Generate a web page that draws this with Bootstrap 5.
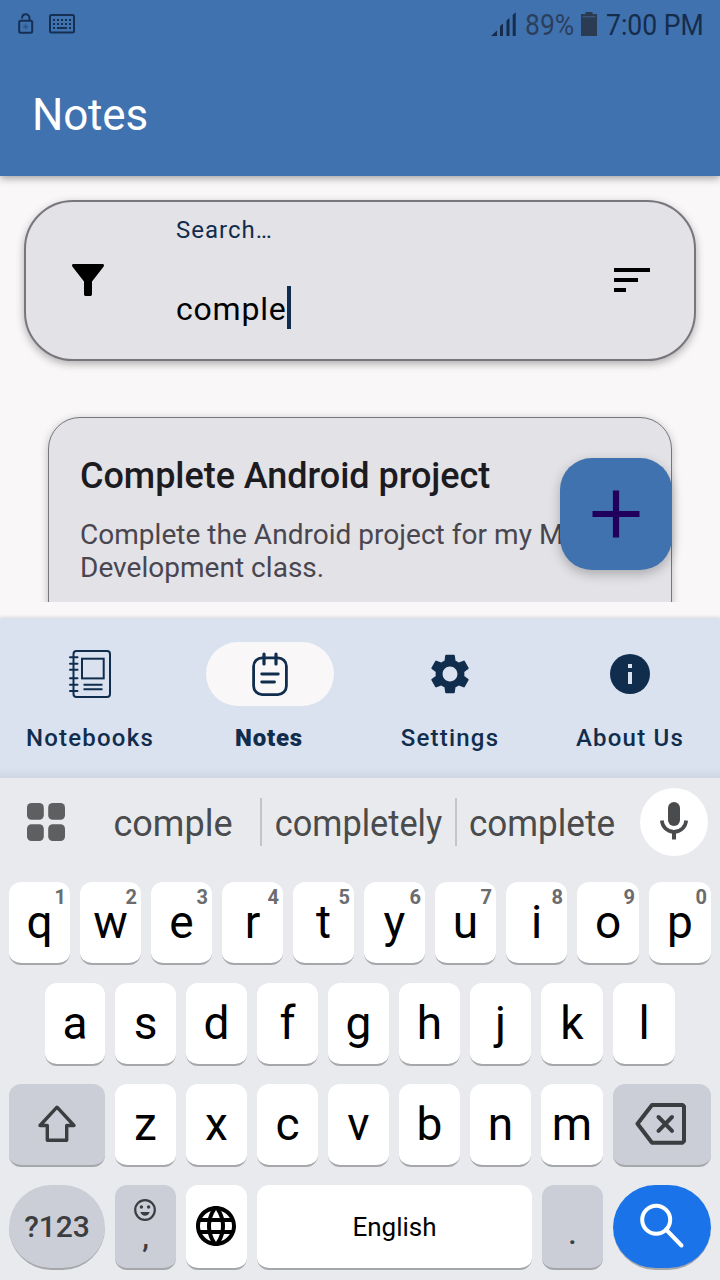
<!DOCTYPE html>
<html lang="en">
<head>
<meta charset="utf-8">
<meta name="viewport" content="width=device-width, initial-scale=1">
<title>Notes</title>
<link href="https://cdn.jsdelivr.net/npm/bootstrap@5.3.0/dist/css/bootstrap.min.css" rel="stylesheet">
<style>
  :root { --brand: #4072af; --ink: #112d4e; --sheet: #e2e2e7; --page: #f9f7f8; --kb: #e8eaed; --key-alt: #cbced6; }
  body { font-family: Roboto, "Liberation Sans", sans-serif; background: var(--page); width: 720px; height: 1280px; overflow: hidden; }
  svg { display: block; flex: none; }
  .app-header { height: 176px; background: var(--brand); box-shadow: 0 2px 8px rgba(0,0,0,.38); z-index: 2; }
  .status-bar { height: 48px; padding: 1px 16px 0 18px; font-size: 30px; line-height: 48px; color: #152c4c; }
  .status-bar svg { margin-top: -1px; }
  .squeeze { display: inline-block; transform-origin: 0 50%; white-space: nowrap; }
  .pct { width: 48px; margin-left: 9px; color: #2b3f5c; transform: scaleX(.885); }
  .clock { width: 98px; margin-left: 9px; transform: scaleX(.885); }
  .toolbar { height: 128px; padding: 5px 0 0 32px; font-size: 44px; line-height: 124px; letter-spacing: -.2px; color: #fff; }
  .content-area { height: 426px; padding: 24px 24px 0; }
  .search-box { height: 161px; border: 2px solid #78767c; border-radius: 49px; background: var(--sheet); padding: 0 44px 0 46px; box-shadow: 0 3px 9px rgba(0,0,0,.3); }
  .search-box > svg { margin-top: 62px; }
  .search-box > svg:last-child { margin-top: 66px; }
  .search-field { margin-left: 72px; padding-top: 14px; }
  .search-hint { font-size: 24px; line-height: 28px; letter-spacing: 1px; color: var(--ink); }
  .search-value { margin-top: 42px; font-size: 32px; line-height: 46px; letter-spacing: .8px; color: #000; height: 44px; }
  .caret { width: 4px; height: 43px; background: var(--ink); }
  .note-card { margin: 56px 24px 0; height: 260px; border: 1px solid #78767c; border-radius: 32px; background: var(--sheet); padding: 36px 31px; box-shadow: 0 2px 9px rgba(0,0,0,.25); }
  .note-title { font-size: 36px; font-weight: 500; line-height: 45px; letter-spacing: -.04px; color: #1c1b1f; }
  .note-text { margin-top: 19px; font-size: 28px; line-height: 33px; letter-spacing: .03px; color: #49464f; }
  .fab { right: 48px; top: 458px; width: 112px; height: 112px; border-radius: 32px; background: var(--brand); box-shadow: 0 4px 12px rgba(0,0,0,.25); z-index: 3; }
  .bottom-nav { margin-top: 16px; height: 160px; background: linear-gradient(#dbe2ef 150px, #ced6e4); padding-top: 24px; color: var(--ink); box-shadow: 0 -1px 3px rgba(0,0,0,.12); }
  .tab-pill { width: 128px; height: 64px; border-radius: 32px; }
  .tab-item.active .tab-pill { background: var(--page); }
  .tab-label { margin-top: 18px; font-size: 24px; line-height: 28px; font-weight: 500; letter-spacing: 1.2px; white-space: nowrap; }
  .tab-item.active .tab-label { font-weight: 900; letter-spacing: .8px; margin-right: 2px; }
  .keyboard { height: 502px; background: var(--kb); }
  .suggestions { height: 104px; padding: 10px 12px 0 27px; }
  .word { font-size: 36px; line-height: 73px; color: #4a4b4d; text-align: center; }
  .word-sep { width: 2px; height: 48px; margin-top: 10px; background: #c2c4c7; }
  .mic { width: 68px; height: 68px; background: #fff; }
  .keys { padding: 0 9px; gap: 10px; margin-bottom: 18px; }
  .key { position: relative; flex: 0 0 61px; height: 83px; border-radius: 12px; background: #fff; border-bottom: 2px solid #a5a7ab; color: #000; font-size: 46px; line-height: 80px; text-align: center; }
  .key.alt { background: var(--key-alt); color: #3c3d40; }
  .key.w-l { flex-basis: 96px; } .key.w-r { flex-basis: 98px; } .key.w-m { flex-basis: 62px; } .key.w-n { flex-basis: 60px; } .key.w-space { flex-basis: 275px; }
  .key sup { position: absolute; top: 4px; right: 4px; font-size: 20px; font-weight: 700; line-height: 22px; color: #6b6c6e; }
  .last .key { height: 85px; line-height: 84px; }
  .key.round { border-radius: 48px; }
</style>
</head>
<body class="d-flex flex-column position-relative">

<header class="app-header position-relative flex-shrink-0">
  <div class="status-bar d-flex align-items-center">
    <svg width="16" height="22" viewBox="0 0 16 22" fill="none" stroke="#152f52"><path d="M4 5.500C4 3 5.500 1.200 7.700 1.200S11.500 3 11.500 5.200V8" stroke-width="2"/><rect x="1.200" y="7.800" width="13" height="12" rx="1.500" stroke-width="2"/><path d="M7.700 10.700v6M4.700 13.700h6M5.700 11.700l4 4M9.700 11.700l-4 4" stroke="#2d568a" stroke-width="1"/></svg>
    <svg style="margin-left:15px" width="26" height="20" viewBox="0 0 26 20"><rect x="1" y="1" width="24" height="17.500" rx="1.500" fill="none" stroke="#152f52" stroke-width="2"/><path d="M4 6h18M4 10h18" stroke="#152f52" stroke-width="2" stroke-dasharray="2 2"/><path d="M4 14h2M8 14h10M20 14h2" stroke="#152f52" stroke-width="2"/></svg>
    <svg class="ms-auto" width="25" height="24" viewBox="0 0 25 24" fill="#152c4c"><path d="M0 24L6 18.500V24zM9 24V14l3-2.500V24zM15.500 24V8.500l3-2.500V24zM21.700 24V3l3-2.700V24z"/></svg>
    <span class="squeeze pct">89%</span>
    <svg style="margin-left:8px" width="16" height="24" viewBox="0 0 16 24"><path d="M4.500 0h7v2H16v22H0V2h4.500z" fill="#2b3b52"/><path d="M1.500 4.800h13" stroke="#4a6b96" stroke-width=".8"/></svg>
    <span class="squeeze clock">7:00 PM</span>
  </div>
  <div class="toolbar">Notes</div>
</header>

<main class="content-area overflow-hidden flex-shrink-0">
  <div class="search-box d-flex align-items-start">
    <svg width="32" height="32" viewBox="0 0 32 32"><path d="M1.500 0h29c1.400 0 2 1.600 1 2.700L20 17.500v12.700c0 1-.8 1.800-1.800 1.800h-4.400c-1 0-1.800-.8-1.800-1.800V17.500L.5 2.700C-.5 1.600.1 0 1.500 0z"/></svg>
    <div class="search-field">
      <div class="search-hint">Search…</div>
      <div class="search-value d-flex"><span>comple</span><i class="caret"></i></div>
    </div>
    <svg class="ms-auto" width="36" height="24" viewBox="0 0 36 24"><path d="M0 0h36v4H0zM0 10h24v4H0zM0 20h12v4H0z"/></svg>
  </div>
  <article class="note-card">
    <div class="note-title">Complete Android project</div>
    <div class="note-text">Complete the Android project for my Mobile Development class.</div>
  </article>
</main>

<div class="fab position-absolute d-flex align-items-center justify-content-center">
  <svg width="48" height="48" viewBox="0 0 48 48"><path d="M24 .5v47M.5 24h47" stroke="#21005d" stroke-width="6.200"/></svg>
</div>

<nav class="bottom-nav d-flex flex-shrink-0">
  <div class="tab-item col-3 d-flex flex-column align-items-center">
    <div class="tab-pill d-flex align-items-center justify-content-center"><svg width="48" height="48" viewBox="0 0 48 48" fill="none" stroke="#112d4e" stroke-width="2"><rect x="7.500" y="1" width="36.500" height="46" rx="3"/><path d="M4 7.300H11.500M4 13.700H11.500M4 19.700H11.500M4 28.300H11.500M4 34.700H11.500M4 41H11.500" stroke-linecap="round"/><rect x="16" y="8.700" width="21.700" height="19.700"/><path d="M17.500 34.700h19M17.500 39.300h19"/></svg></div>
    <div class="tab-label">Notebooks</div>
  </div>
  <div class="tab-item active col-3 d-flex flex-column align-items-center">
    <div class="tab-pill d-flex align-items-center justify-content-center"><svg width="48" height="48" viewBox="0 0 48 48" fill="none" stroke="#112d4e" stroke-width="2.800" stroke-linecap="round"><rect x="7.600" y="7.800" width="32.800" height="36.800" rx="8.500"/><path d="M18 4v10M30 4v10" stroke-width="3.200"/><path d="M15.700 24h16.600M15.700 32h12.800"/></svg></div>
    <div class="tab-label">Notes</div>
  </div>
  <div class="tab-item col-3 d-flex flex-column align-items-center">
    <div class="tab-pill d-flex align-items-center justify-content-center"><svg width="48" height="48" viewBox="0 0 24 24" fill="#112d4e"><path d="M19.140 12.940c.04-.3.060-.61.060-.94 0-.32-.02-.64-.07-.94l2.030-1.580c.18-.14.23-.41.12-.61l-1.920-3.320c-.12-.22-.37-.29-.59-.22l-2.390.96c-.5-.38-1.030-.7-1.620-.94L14.400 2.810c-.04-.24-.24-.41-.48-.41h-3.840c-.24 0-.43.17-.47.41L9.250 5.350C8.660 5.590 8.120 5.920 7.630 6.290L5.240 5.330c-.22-.08-.47 0-.59.22L2.740 8.870C2.620 9.080 2.660 9.340 2.860 9.480l2.030 1.580C4.840 11.360 4.800 11.690 4.800 12s.02.64.07.94l-2.030 1.580c-.18.14-.23.41-.12.61l1.920 3.320c.12.22.37.29.59.22l2.390-.96c.5.38 1.030.7 1.620.94l.36 2.540c.05.24.24.41.48.41h3.840c.24 0 .44-.17.47-.41l.36-2.540c.59-.24 1.130-.56 1.620-.94l2.390.96c.22.08.47 0 .59-.22l1.920-3.320c.12-.22.07-.47-.12-.61L19.140 12.940zM12 15.700c-2.050 0-3.700-1.650-3.700-3.700s1.650-3.700 3.700-3.700 3.700 1.650 3.700 3.700-1.650 3.700-3.700 3.700z"/></svg></div>
    <div class="tab-label">Settings</div>
  </div>
  <div class="tab-item col-3 d-flex flex-column align-items-center">
    <div class="tab-pill d-flex align-items-center justify-content-center"><svg width="48" height="48" viewBox="0 0 48 48"><circle cx="24" cy="24" r="20" fill="#112d4e"/><path d="M22 14h4v4h-4zM22 22h4v12h-4z" fill="#dbe2ef"/></svg></div>
    <div class="tab-label">About Us</div>
  </div>
</nav>

<section class="keyboard flex-shrink-0">
  <div class="suggestions d-flex">
    <svg style="margin-top:15px" width="38" height="38" viewBox="0 0 38 38" fill="#5e5f61"><rect width="16.800" height="16.800" rx="4.500"/><rect x="21.200" width="16.800" height="16.800" rx="4.500"/><rect y="21.200" width="16.800" height="16.800" rx="4.500"/><rect x="21.200" y="21.200" width="16.800" height="16.800" rx="4.500"/></svg>
    <div class="word" style="width:176px;margin-left:20px">comple</div>
    <div class="word-sep" style="margin-left:-1px"></div>
    <div class="word" style="width:193px;transform:scaleX(.953)">completely</div>
    <div class="word-sep"></div>
    <div class="word" style="width:170px;transform:scaleX(.975)">complete</div>
    <div class="mic rounded-circle ms-auto"><svg width="68" height="68" viewBox="0 0 68 68"><rect x="28" y="14" width="12" height="24" rx="6" fill="#4a4b4d"/><path d="M21.800 32.500c.5 6.500 5.700 11.300 12.200 11.300s11.700-4.800 12.200-11.300" fill="none" stroke="#4a4b4d" stroke-width="3.600"/><path d="M34 44v7.500" stroke="#4a4b4d" stroke-width="4"/></svg></div>
  </div>

  <div class="keys d-flex">
    <div class="key">q<sup>1</sup></div><div class="key">w<sup>2</sup></div><div class="key">e<sup>3</sup></div><div class="key">r<sup>4</sup></div><div class="key">t<sup>5</sup></div><div class="key">y<sup>6</sup></div><div class="key">u<sup>7</sup></div><div class="key">i<sup>8</sup></div><div class="key w-m">o<sup>9</sup></div><div class="key w-m">p<sup>0</sup></div>
  </div>
  <div class="keys d-flex" style="padding:0 45px">
    <div class="key w-n">a</div><div class="key">s</div><div class="key">d</div><div class="key">f</div><div class="key">g</div><div class="key">h</div><div class="key">j</div><div class="key w-m">k</div><div class="key w-m">l</div>
  </div>
  <div class="keys d-flex">
    <div class="key alt w-l d-flex justify-content-center"><svg style="margin-top:20px" width="40" height="40" viewBox="0 0 40 40"><path d="M20 3.200L37 21.500H29.700V36.200H10.300V21.500H3z" fill="none" stroke="#3c3d40" stroke-width="3.400" stroke-linejoin="round"/></svg></div>
    <div class="key">z</div><div class="key">x</div><div class="key">c</div><div class="key">v</div><div class="key">b</div><div class="key">n</div><div class="key w-m">m</div>
    <div class="key alt w-r"><svg style="margin:19px 0 0 22px" width="51" height="42" viewBox="0 0 51 42" fill="none" stroke="#3c3d40" stroke-width="4"><path d="M17 2H47.500L49 3.500V38.200L47.500 39.700H17L2.500 20.800z" stroke-linejoin="round"/><path d="M23.500 14L37 27.800M37 14L23.500 27.800" stroke-linecap="round"/></svg></div>
  </div>
  <div class="keys last d-flex mb-0">
    <div class="key alt round w-l" style="font-size:30px;font-weight:500">?123</div>
    <div class="key alt d-flex flex-column" style="font-size:30px;font-weight:500"><svg style="margin:14px 0 0 19px" width="22" height="22" viewBox="0 0 22 22" fill="#3c3d40"><circle cx="11" cy="11" r="9.800" fill="none" stroke="#3c3d40" stroke-width="2.200"/><circle cx="7.400" cy="8" r="1.700"/><circle cx="14.600" cy="8" r="1.700"/><path d="M6.300 13h9.400c-.7 2.400-2.500 3.700-4.700 3.700S7 15.400 6.300 13z"/></svg><span style="line-height:30px;margin-top:1px">,</span></div>
    <div class="key"><svg style="margin:17px 0 0 6px" width="48" height="48" viewBox="0 0 24 24"><path d="M11.990 2C6.470 2 2 6.480 2 12s4.470 10 9.990 10C17.520 22 22 17.520 22 12S17.520 2 11.990 2zm6.930 6h-2.950c-.32-1.250-.78-2.450-1.380-3.560 1.840.63 3.370 1.910 4.330 3.560zM12 4.040c.83 1.200 1.480 2.530 1.910 3.960h-3.820c.43-1.430 1.080-2.760 1.910-3.960zM4.260 14C4.100 13.360 4 12.690 4 12s.1-1.360.26-2h3.380c-.08.66-.14 1.320-.14 2 0 .68.06 1.340.14 2H4.260zm.82 2h2.950c.32 1.250.78 2.450 1.380 3.560-1.840-.63-3.370-1.900-4.330-3.560zm2.950-8H5.080c.96-1.660 2.490-2.930 4.330-3.560C8.810 5.550 8.350 6.750 8.030 8zM12 19.960c-.83-1.200-1.480-2.530-1.910-3.960h3.820c-.43 1.430-1.080 2.760-1.910 3.960zM14.340 14H9.660c-.09-.66-.16-1.320-.16-2 0-.68.07-1.350.16-2h4.680c.09.65.16 1.320.16 2 0 .68-.07 1.340-.16 2zm.25 5.560c.6-1.110 1.060-2.310 1.380-3.560h2.950c-.96 1.650-2.490 2.930-4.330 3.560zM16.360 14c.08-.66.14-1.320.14-2 0-.68-.06-1.340-.14-2h3.380c.16.640.26 1.310.26 2s-.1 1.360-.26 2h-3.380z"/></svg></div>
    <div class="key w-space" style="font-size:26px">English</div>
    <div class="key alt" style="font-size:30px;font-weight:500;line-height:98px">.</div>
    <div class="key round w-r" style="background:#1a73e8"><svg style="margin:18px 0 0 26px" width="46" height="46" viewBox="0 0 46 46" fill="none" stroke="#fff" stroke-width="4"><circle cx="17.200" cy="16.700" r="14"/><path d="M27 26.500L42.500 42.500" stroke-linecap="round"/></svg></div>
  </div>
</section>

<script src="https://cdn.jsdelivr.net/npm/bootstrap@5.3.0/dist/js/bootstrap.bundle.min.js"></script>
</body>
</html>
